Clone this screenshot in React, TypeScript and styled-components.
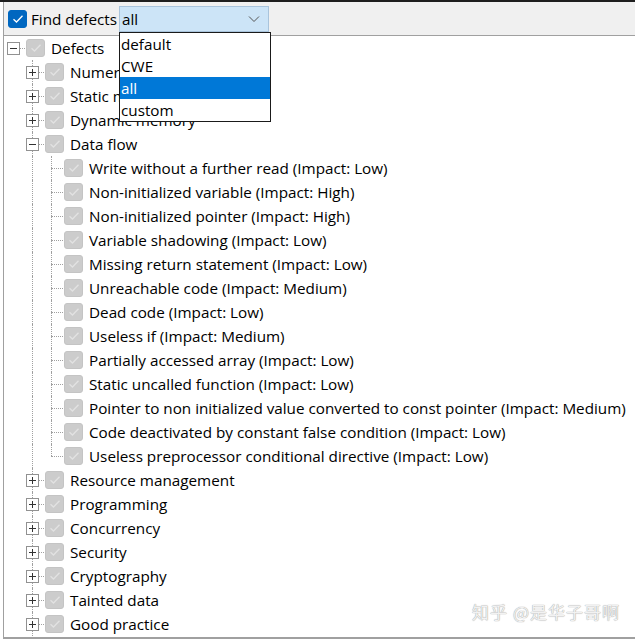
import React from "react";
import styled, { createGlobalStyle } from "styled-components";

const GlobalStyle = createGlobalStyle`
  html, body {
    margin: 0;
    padding: 0;
    background: #ffffff;
  }
  body {
    font-family: "Open Sans", "Noto Sans", sans-serif;
    font-size: 15.25px;
    color: #000;
    overflow: hidden;
  }
`;

interface TreeNode {
  label: string;
  level: number;
  expander?: "plus" | "minus";
  last?: boolean;
  // guide columns that still carry a vertical line
  guides?: boolean[];
}

const rows: TreeNode[] = [
  { label: "Defects", level: 0, expander: "minus", last: true },
  { label: "Numerical", level: 1, expander: "plus" },
  { label: "Static memory", level: 1, expander: "plus" },
  { label: "Dynamic memory", level: 1, expander: "plus" },
  { label: "Data flow", level: 1, expander: "minus" },
  ...[
    "Write without a further read (Impact: Low)",
    "Non-initialized variable (Impact: High)",
    "Non-initialized pointer (Impact: High)",
    "Variable shadowing (Impact: Low)",
    "Missing return statement (Impact: Low)",
    "Unreachable code (Impact: Medium)",
    "Dead code (Impact: Low)",
    "Useless if (Impact: Medium)",
    "Partially accessed array (Impact: Low)",
    "Static uncalled function (Impact: Low)",
    "Pointer to non initialized value converted to const pointer (Impact: Medium)",
    "Code deactivated by constant false condition (Impact: Low)",
    "Useless preprocessor conditional directive (Impact: Low)",
  ].map((label, i, all) => ({
    label,
    level: 2,
    last: i === all.length - 1,
    guides: [false, true],
  })),
  { label: "Resource management", level: 1, expander: "plus" },
  { label: "Programming", level: 1, expander: "plus" },
  { label: "Concurrency", level: 1, expander: "plus" },
  { label: "Security", level: 1, expander: "plus" },
  { label: "Cryptography", level: 1, expander: "plus" },
  { label: "Tainted data", level: 1, expander: "plus" },
  { label: "Good practice", level: 1, expander: "plus" },
];

const options = ["default", "CWE", "all", "custom"];

const Page = styled.div`
  position: relative;
  width: 635px;
  height: 641px;
  overflow: hidden;
`;

const TopRule = styled.div`
  height: 2px;
  background: #1e1e1e;
`;

const Frame = styled.div`
  margin-left: 3px;
  border-left: 1px solid #a0a0a0;
`;

const Header = styled.div`
  height: 33px;
  display: flex;
  align-items: center;
  padding-left: 4px;
  background: #f0f0f0;
  border-bottom: 1px solid #a0a0a0;
`;

const Check = styled.span<{ $on?: boolean }>`
  flex: none;
  width: 19px;
  height: 18px;
  box-sizing: border-box;
  border-radius: 3px;
  display: flex;
  align-items: center;
  justify-content: center;
  background: ${(p) => (p.$on ? "#0067c0" : "#cccccc")};
  border: 1px solid ${(p) => (p.$on ? "#0067c0" : "#c4c4c4")};
`;

const HeaderLabel = styled.span`
  margin: 0 2px 0 4px;
  white-space: nowrap;
`;

const Combo = styled.div`
  position: relative;
  width: 150px;
  height: 26px;
  box-sizing: border-box;
  margin-top: 1px;
  display: flex;
  align-items: center;
  justify-content: space-between;
  padding: 0 8px 0 2px;
  background: #cce4f7;
  border: 1px solid #a9c4dc;
`;

const DropList = styled.ul`
  position: absolute;
  top: 25px;
  left: -1px;
  width: 150px;
  margin: 0;
  padding: 0;
  list-style: none;
  background: #ffffff;
  border: 1px solid #1a1a1a;
  z-index: 2;
`;

const DropItem = styled.li<{ $active?: boolean }>`
  height: 22px;
  line-height: 22px;
  padding-left: 1px;
  background: ${(p) => (p.$active ? "#0078d7" : "transparent")};
  color: ${(p) => (p.$active ? "#ffffff" : "#000000")};
`;

const Tree = styled.div`
  height: 601px;
  overflow: hidden;
  border-bottom: 2px solid #a0a0a0;
`;

const Row = styled.div`
  height: 24px;
  display: flex;
  align-items: center;
  white-space: nowrap;
`;

const Guide = styled.span<{ $line?: boolean }>`
  flex: none;
  position: relative;
  width: 19px;
  height: 24px;
  &::before {
    content: "";
    display: ${(p) => (p.$line ? "block" : "none")};
    position: absolute;
    left: 9px;
    top: 0;
    bottom: 0;
    border-left: 1px dotted #a0a0a0;
  }
`;

const Joint = styled.span<{ $up?: boolean; $down?: boolean }>`
  flex: none;
  position: relative;
  width: 22px;
  height: 24px;
  &::before {
    content: "";
    position: absolute;
    left: 9px;
    top: ${(p) => (p.$up ? "0" : "12px")};
    bottom: ${(p) => (p.$down ? "0" : "12px")};
    border-left: 1px dotted #a0a0a0;
  }
  &::after {
    content: "";
    position: absolute;
    left: 9px;
    right: 1px;
    top: 12px;
    border-top: 1px dotted #a0a0a0;
  }
`;

const Expander = styled.span`
  position: absolute;
  left: 3px;
  top: 6px;
  width: 13px;
  height: 13px;
  box-sizing: border-box;
  border: 1px solid #919191;
  background: #ffffff;
  z-index: 1;
  &::before,
  &::after {
    content: "";
    position: absolute;
    background: #333333;
  }
  &::before {
    left: 2px;
    right: 2px;
    top: 5px;
    height: 1px;
  }
`;

const PlusExpander = styled(Expander)`
  &::after {
    top: 2px;
    bottom: 2px;
    left: 5px;
    width: 1px;
  }
`;

const Label = styled.span`
  margin-left: 6px;
  color: #000000;
`;

const Watermark = styled.div`
  position: absolute;
  right: 15px;
  bottom: 17px;
  font-family: "Noto Sans CJK SC", "Noto Sans", sans-serif;
  font-size: 17px;
  color: #f2f2f2;
  text-shadow: 0 0 1px #a0a0a0, 0 0 1px #b8b8b8;
  letter-spacing: 1px;
  pointer-events: none;
`;

function Tick({ color }: { color: string }) {
  return (
    <svg width="12" height="10" viewBox="0 0 12 10">
      <path d="M1.5 5.2 L4.5 8 L10.5 1.8" fill="none" stroke={color} strokeWidth="1.3" />
    </svg>
  );
}

function Chevron() {
  return (
    <svg width="12" height="8" viewBox="0 0 12 8">
      <path d="M1 1.5 L6 6.5 L11 1.5" fill="none" stroke="#555" strokeWidth="1" />
    </svg>
  );
}

function TreeRow({ node }: { node: TreeNode }) {
  const guides = node.guides ?? [];
  const cols = [];
  for (let i = 0; i < node.level; i++) {
    cols.push(<Guide key={i} $line={guides[i] ?? false} />);
  }
  return (
    <Row>
      {cols}
      <Joint $up={node.level > 0} $down={node.level > 0 && !node.last}>
        {node.expander === "plus" && <PlusExpander />}
        {node.expander === "minus" && <Expander />}
      </Joint>
      <Check>
        <Tick color="#e2e2e2" />
      </Check>
      <Label>{node.label}</Label>
    </Row>
  );
}

export default function App() {
  return (
    <Page>
      <GlobalStyle />
      <TopRule />
      <Frame>
        <Header>
          <Check $on>
            <Tick color="#ffffff" />
          </Check>
          <HeaderLabel>Find defects</HeaderLabel>
          <Combo>
            <span>all</span>
            <Chevron />
            <DropList>
              {options.map((o) => (
                <DropItem key={o} $active={o === "all"}>
                  {o}
                </DropItem>
              ))}
            </DropList>
          </Combo>
        </Header>
        <Tree>
          {rows.map((n, i) => (
            <TreeRow key={i} node={n} />
          ))}
        </Tree>
      </Frame>
      <Watermark>知乎 @是华子哥啊</Watermark>
    </Page>
  );
}
